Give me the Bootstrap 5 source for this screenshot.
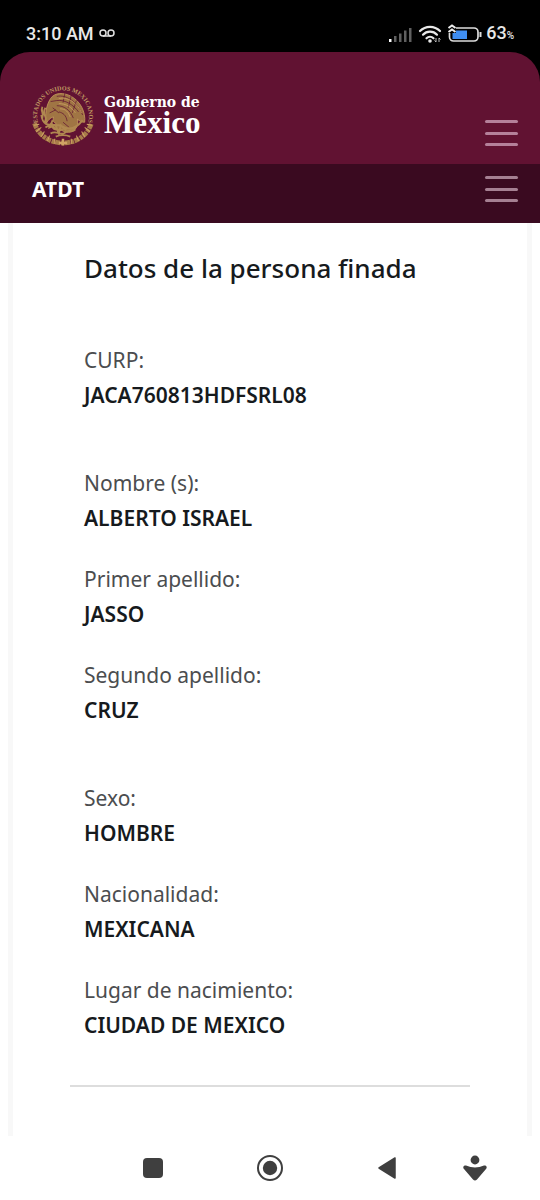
<!DOCTYPE html>
<html lang="es">
<head>
<meta charset="utf-8">
<meta name="viewport" content="width=device-width, initial-scale=1">
<title>Datos de la persona finada</title>
<link href="https://cdn.jsdelivr.net/npm/bootstrap@5.3.0/dist/css/bootstrap.min.css" rel="stylesheet">
<style>
body { font-family: "Noto Sans", sans-serif; background: #000; color: #161a1d; }
svg { display: block; }
.status { height: 52px; padding: 16px 26px 0; font: 500 18px/36px Roboto, sans-serif; color: #e8e8e8; }
.status .pct { font-size: 10px; }
.gov { height: 112px; background: #611232; border-radius: 30px 30px 0 0; padding: 32px 22px 0 32px; }
.brand { color: #fff; margin-left: 10px; padding-top: 10px; }
.brand-top { font: 700 14px/16px "DejaVu Serif", serif; }
.brand-main { font: 700 31px/26px "Liberation Serif", serif; }
.sub { height: 59px; background: #3a0a20; padding: 0 22px 0 32px; }
.sub a { font-size: 21px; line-height: 51px; }
.burger { width: 33px; height: 26px; margin-top: 36px; }
.sub .burger { margin-top: 12px; }
.burger span { height: 3px; border-radius: 2px; background: #b5809a; }
.sub .burger span { background: #a58092; }
.sheet { margin: 0 8px; border: solid #f8f8f8; border-width: 0 5px; padding: 27px 57px 0; }
h1 { font-size: 26px; font-weight: 500; line-height: 36px; margin: 0 14px 56px; }
.group { margin: 0 14px; padding-bottom: 27px; }
.group dt { font-size: 21px; font-weight: 400; line-height: 36px; color: #4b4d4f; }
.group dd { font-size: 21px; font-weight: 600; line-height: 35px; margin-bottom: 25px; }
hr { margin: 0; border-top: 2px solid #ddd; opacity: 1; }
.group.last { padding-bottom: 17px; }
.keys { height: 64px; padding: 0 36px 0 95px; }
.keys button { flex: 2 2 0; }
.keys .extra { flex: 1 1 0; }
</style>
</head>
<body class="d-flex flex-column min-vh-100">
<div class="status d-flex justify-content-between">
  <div class="d-flex align-items-center">
    <span>3:10 AM</span>
    <svg class="ms-1" width="18" height="10" viewBox="0 0 18 10" fill="none" stroke="#e0e0e0" stroke-width="1.500"><circle cx="5" cy="4" r="3"/><circle cx="13" cy="4" r="3"/><path d="M5 7h8"/></svg>
  </div>
  <div class="d-flex align-items-center">
    <svg width="94" height="20" viewBox="0 0 94 20">
      <g fill="#606060"><path d="M6 12h2.500v6H6zM11 9.500h2.500V18H11zM16 6.500h2.500V18H16zM21 4h2.500v14H21z"/></g>
      <path d="M1 15h2.500v3H1z" fill="#fff"/>
      <g fill="none" stroke="#e8e8e8" stroke-width="2.200" stroke-linecap="round"><path d="M32 7a14 14 0 0 1 20 0M35 10.700a9.500 9.500 0 0 1 14 0M38.500 14.300a5 5 0 0 1 7 0"/></g>
      <circle cx="42" cy="17" r="1.800" fill="#e8e8e8"/>
      <path d="M48 14v4M46.500 16.500L48 18M51 18v-4m1.500 1.500L51 14" stroke="#bbb" fill="none"/>
      <rect x="61.500" y="4" width="28.500" height="13" rx="4" fill="none" stroke="#ddd" stroke-width="1.700"/>
      <path d="M64.500 6.500H79V15H64.500z" fill="#3f8ef2"/>
      <path d="M91.500 8h2v5h-2z" fill="#ddd"/>
      <path d="M59 0h9v9h-9z" fill="#000"/>
      <path d="M60.500 4L64 1.500 67.500 4M60.500 8L64 5.500 67.500 8" fill="none" stroke="#eee" stroke-width="2"/>
    </svg>
    <span class="ms-1">63<span class="pct">%</span></span>
  </div>
</div>

<header>
  <div class="gov d-flex justify-content-between align-items-start">
    <a href="#" class="d-flex text-decoration-none" aria-label="Gobierno de México">
      <svg width="62" height="62" viewBox="0 0 60 60" fill="none" stroke="#b08850">
        <defs><path id="ring" d="M5.500 36A25 25 0 1 1 54.500 36"/></defs>
        <text fill="#c09a62" stroke="none" font-family="Liberation Serif, serif" font-weight="700" font-size="6"><textPath href="#ring" startOffset="50%" text-anchor="middle">ESTADOS UNIDOS MEXICANOS</textPath></text>
        <path d="M2.500 38C6 49 16 57 30 57S54 49 57.500 38" stroke-width="4.600" stroke-dasharray="5 .8 3 .6" stroke="#a87d49"/>
        <path d="M2 40l5-1M4 46l5-4M9 51l3-5M15 55l2-5M22 58l0-5M38 58l0-5M45 55l-2-5M51 51l-3-5M56 46l-5-4M58 40l-5-1" stroke="#d0a365" stroke-width="1"/>
        <path d="M18 14c4-6 13-6 20-2 9 5 14 15 13 25-3 0-5-1-7-3 1 5-1 10-5 12-5 2-10 0-12-3-2 2-5 2-7 0 2-1 4-2 3-5-3-1-3-4-2-6-2 0-5 2-7 6-2-8 0-18 4-24z" fill="#a07544" stroke="#c59a5d" stroke-width=".8"/>
        <path d="M24 12c9-2 20 5 25 18M24 16c8-1 16 4 21 11M24 21c7 0 13 4 16 12M26 27c4 1 7 3 8 9M32 8l-2 10M38 11l-3 12M43 16l-4 12M18 17l6-1M20 23l6 5M17 28l6-3M30 37l6 5" stroke="#611232" stroke-width=".7"/>
        <path d="M26 14c8-2 18 4 22 14M26 19c7 0 12 3 16 9M27 24c6 0 8 3 10 8" stroke="#d0a365" stroke-width=".7"/>
        <path d="M13 23c-4 7 2 8 0 12s4 6 7 3M9 30c2 15 13 7 20 11s14 2 20-6M13 42c7-5 10 6 16 2s9 4 16-5M18 48c6-4 10 3 14-1s6 1 10-3M20 35l-3 7 6-2 3 8 2-8 5 5M10 22c-2 5 2 6 0 11M23 51c4-2 10-2 14 0" stroke-width="1.800"/>
        <path d="M26 57h8M30 53v6.500" stroke="#d0a365" stroke-width="2.400"/>
      </svg>
      <div class="brand">
        <div class="brand-top">Gobierno de</div>
        <div class="brand-main">México</div>
      </div>
    </a>
    <button type="button" class="burger btn p-0 border-0 rounded-0 d-flex flex-column justify-content-between align-items-stretch" aria-label="Menú"><span></span><span></span><span></span></button>
  </div>
  <nav class="sub d-flex justify-content-between align-items-start">
    <a href="#" class="text-white text-decoration-none fw-bold">ATDT</a>
    <button type="button" class="burger btn p-0 border-0 rounded-0 d-flex flex-column justify-content-between align-items-stretch" aria-label="Submenú"><span></span><span></span><span></span></button>
  </nav>
</header>

<div class="bg-white flex-grow-1 d-flex flex-column">
<main class="sheet flex-grow-1">
  <h1>Datos de la persona finada</h1>
  <dl class="group">
    <dt>CURP:</dt><dd>JACA760813HDFSRL08</dd>
  </dl>
  <dl class="group">
    <dt>Nombre (s):</dt><dd>ALBERTO ISRAEL</dd>
    <dt>Primer apellido:</dt><dd>JASSO</dd>
    <dt>Segundo apellido:</dt><dd>CRUZ</dd>
  </dl>
  <dl class="group last">
    <dt>Sexo:</dt><dd>HOMBRE</dd>
    <dt>Nacionalidad:</dt><dd>MEXICANA</dd>
    <dt>Lugar de nacimiento:</dt><dd>CIUDAD DE MEXICO</dd>
  </dl>
  <hr>
</main>
<footer class="keys d-flex align-items-center">
  <button type="button" class="btn border-0 p-0 d-flex justify-content-center" aria-label="Recientes"><svg width="20" height="20"><rect width="20" height="20" rx="4" fill="#3f3f3f"/></svg></button>
  <button type="button" class="btn border-0 p-0 d-flex justify-content-center" aria-label="Inicio"><svg width="28" height="28"><circle cx="14" cy="14" r="12" fill="none" stroke="#3f3f3f" stroke-width="2"/><circle cx="14" cy="14" r="7.200" fill="#3f3f3f"/></svg></button>
  <button type="button" class="btn border-0 p-0 d-flex justify-content-center" aria-label="Atrás"><svg width="20" height="24"><path d="M18 2v20L2 12z" fill="#3f3f3f" stroke="#3f3f3f" stroke-width="1.500" stroke-linejoin="round"/></svg></button>
  <button type="button" class="extra btn border-0 p-0 d-flex justify-content-center" aria-label="Accesibilidad"><svg width="26" height="28" fill="#3f3f3f"><circle cx="13" cy="6" r="4.400"/><path d="M4 11.500c6 2.500 12 2.500 18 0 2.500-.7 3.500 2 2 3.500L15 25.500q-2 2-4 0L2 15c-1.500-1.500-.5-4.200 2-3.500z"/></svg></button>
</footer>
</div>
<script src="https://cdn.jsdelivr.net/npm/bootstrap@5.3.0/dist/js/bootstrap.bundle.min.js"></script>
</body>
</html>
